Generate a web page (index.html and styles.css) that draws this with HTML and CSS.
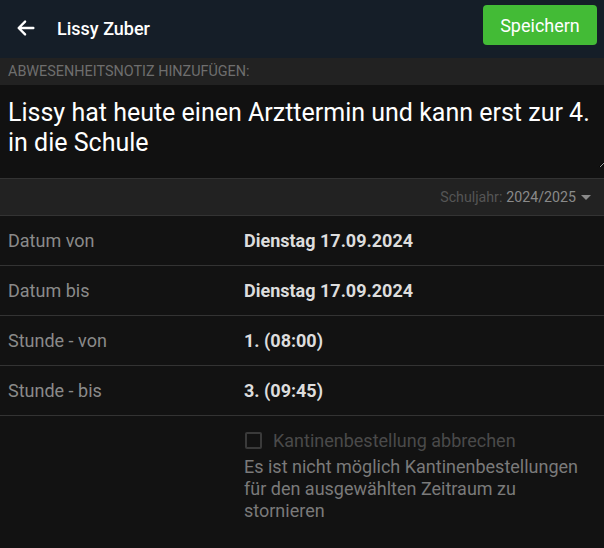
FILE: index.html
```html
<!DOCTYPE html>
<html lang="de">
<head>
    <meta charset="UTF-8">
    <meta name="viewport" content="width=device-width, initial-scale=1.0">
    <title>Abwesenheitsnotiz</title>
    <link rel="stylesheet" href="styles.css">
</head>
<body>

    <div class="topbar">
        <a class="back" href="#">
            <svg width="22" height="22" viewBox="0 0 24 24"><path d="M20 12H5M11 5l-7 7 7 7" fill="none" stroke="#fff" stroke-width="2.6" stroke-linecap="round" stroke-linejoin="round"/></svg>
        </a>
        <div class="title">Lissy Zuber</div>
        <button class="save">Speichern</button>
    </div>

    <div class="section-label">Abwesenheitsnotiz hinzufügen:</div>
    <div class="note-wrap">
        <textarea class="note" rows="3">Lissy hat heute einen Arzttermin und kann erst zur 4. in die Schule</textarea>
    </div>

    <div class="year-bar">
        <span class="year-label">Schuljahr:</span>
        <span class="year-value">2024/2025</span>
        <span class="caret"></span>
    </div>

    <div class="rows">
        <div class="row">
            <div class="row-label">Datum von</div>
            <div class="row-value">Dienstag 17.09.2024</div>
        </div>
        <div class="row">
            <div class="row-label">Datum bis</div>
            <div class="row-value">Dienstag 17.09.2024</div>
        </div>
        <div class="row">
            <div class="row-label">Stunde - von</div>
            <div class="row-value">1. (08:00)</div>
        </div>
        <div class="row">
            <div class="row-label">Stunde - bis</div>
            <div class="row-value">3. (09:45)</div>
        </div>
    </div>

    <div class="canteen">
        <label class="check disabled">
            <span class="box"></span>
            Kantinenbestellung abbrechen
        </label>
        <p class="hint">Es ist nicht möglich Kantinenbestellungen für den ausgewählten Zeitraum zu stornieren</p>
    </div>

</body>
</html>
```

FILE: styles.css
```css
/* Grundlayout */
body {
    margin: 0;
    background-color: #121212;
    font-family: Roboto, "Liberation Sans", sans-serif;
    color: #ddd;
}

/* Kopfzeile */
.topbar {
    display: flex;
    align-items: center;
    height: 58px;
    background-color: #151e28;
    padding: 0 7px 8px 15px;
    box-sizing: border-box;
}
.back {
    display: flex;
    width: 22px;
    height: 22px;
    margin-top: 6px;
}
.title {
    flex: 1;
    margin-left: 20px;
    margin-top: 7px;
    font-size: 18px;
    font-weight: 500;
    color: #fff;
}
.save {
    width: 114px;
    height: 40px;
    background-color: #43bb36;
    color: #fff;
    border: none;
    border-radius: 4px;
    font-family: inherit;
    font-size: 18px;
    cursor: pointer;
}

/* Notiz */
.section-label {
    height: 27px;
    line-height: 28px;
    padding-left: 8px;
    background-color: #222;
    color: #6e6e6e;
    font-size: 14.4px;
    text-transform: uppercase;
}
.note-wrap {
    height: 93px;
    background-color: #111;
    border-bottom: 1px solid #333;
    overflow: hidden;
}
.note {
    display: block;
    width: calc(100% + 3px);
    height: 83px;
    box-sizing: border-box;
    padding: 13px 10px 0 8px;
    margin: 0;
    background-color: #111;
    border: none;
    outline: none;
    color: #fff;
    font-family: inherit;
    font-size: 25px;
    line-height: 30px;
    resize: vertical;
}

/* Schuljahr */
.year-bar {
    display: flex;
    justify-content: flex-end;
    align-items: center;
    gap: 4px;
    height: 36px;
    padding-right: 13px;
    background-color: #222;
    border-bottom: 1px solid #333;
    font-size: 14.2px;
}
.year-label {
    color: #555;
}
.year-value {
    color: #8a8a8a;
}
.caret {
    width: 0;
    height: 0;
    margin-left: 1px;
    border-left: 5px solid transparent;
    border-right: 5px solid transparent;
    border-top: 5px solid #8a8a8a;
}

/* Zeilen */
.row {
    display: flex;
    align-items: center;
    height: 49px;
    border-bottom: 1px solid #333;
    font-size: 18px;
}
.row-label {
    width: 236px;
    padding-left: 8px;
    color: #8a8a8a;
}
.row-value {
    font-weight: bold;
    color: #ddd;
}

/* Kantine */
.canteen {
    padding: 14px 14px 0 244px;
}
.check {
    display: flex;
    align-items: center;
    gap: 11px;
    font-size: 18px;
}
.check.disabled {
    color: #4a4a4a;
}
.box {
    width: 13px;
    height: 13px;
    margin-left: 1px;
    border: 2px solid #3a3a3a;
    border-radius: 2px;
}
.hint {
    margin: 5px 0 0 0;
    font-size: 18px;
    line-height: 22px;
    color: #7a7a7a;
}
```
